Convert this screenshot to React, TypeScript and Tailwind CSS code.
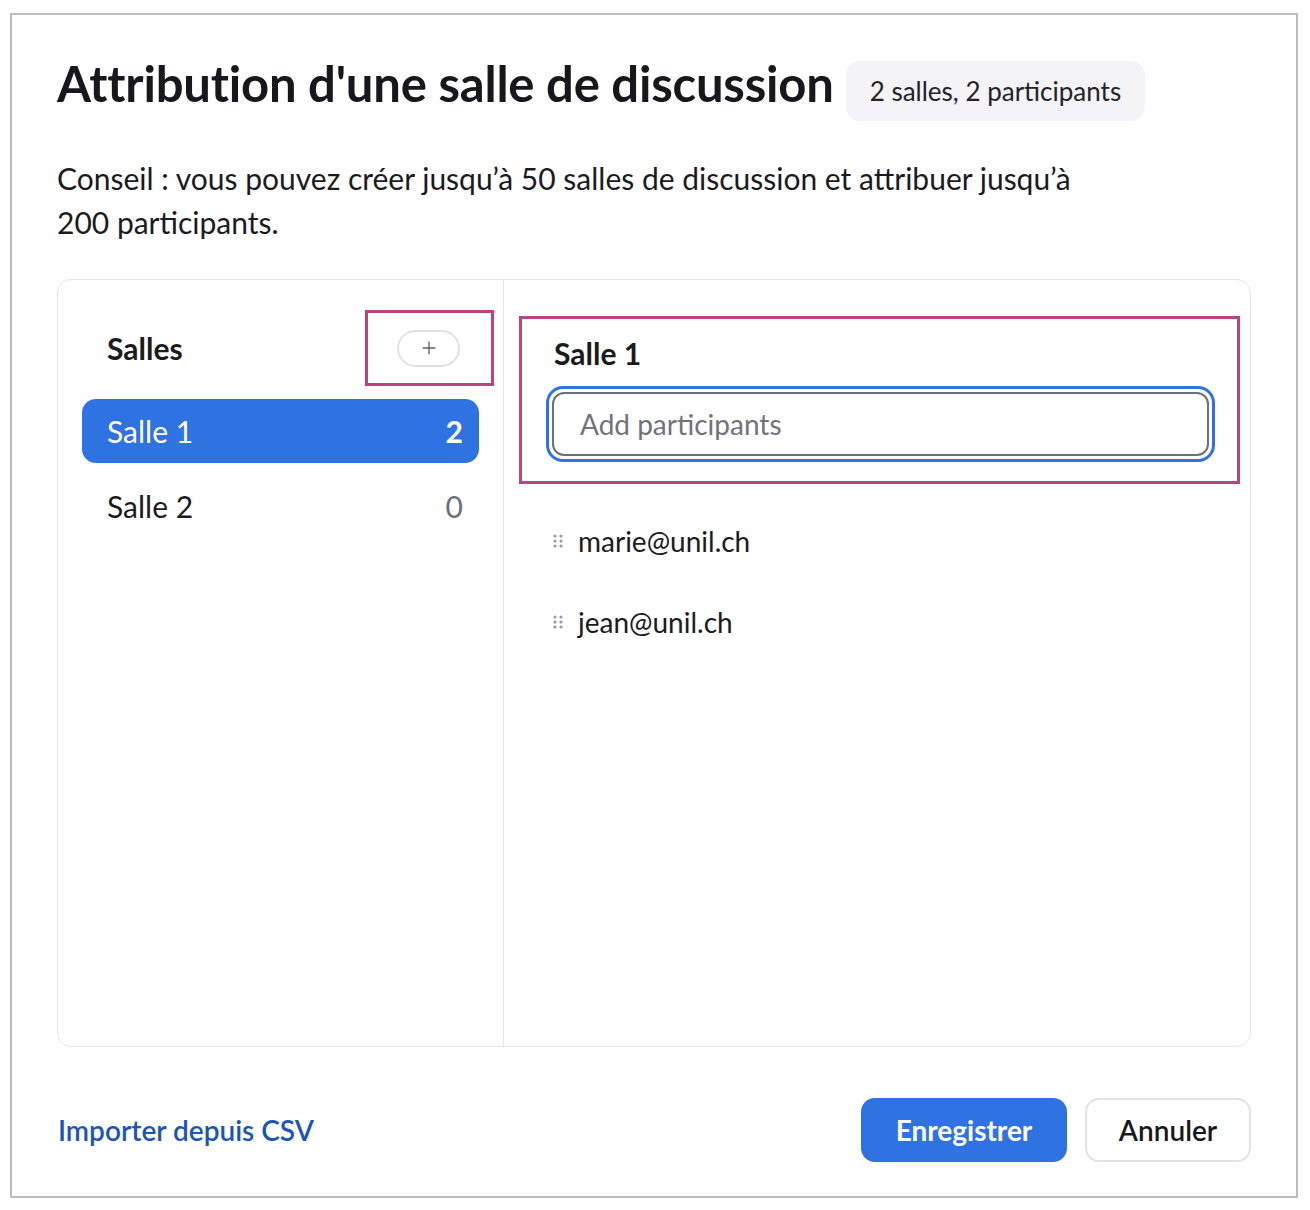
import { Plus } from "lucide-react";

const ROOMS = [
  { name: "Salle 1", count: 2, active: true },
  { name: "Salle 2", count: 0, active: false },
];

const PARTICIPANTS = ["marie@unil.ch", "jean@unil.ch"];

function DragHandle() {
  return (
    <svg width="10" height="14" viewBox="0 0 10 14" className="shrink-0 text-[#9a9ba3]" fill="currentColor">
      <circle cx="2" cy="2" r="1.6" />
      <circle cx="8" cy="2" r="1.6" />
      <circle cx="2" cy="7" r="1.6" />
      <circle cx="8" cy="7" r="1.6" />
      <circle cx="2" cy="12" r="1.6" />
      <circle cx="8" cy="12" r="1.6" />
    </svg>
  );
}

export default function App() {
  return (
    <div className="min-h-[1210px] bg-white pl-[10px] pt-[13px] font-['Lato','Noto_Sans',sans-serif] text-[#1b1b1f]">
      <div className="flex h-[1185px] w-[1288px] flex-col border-2 border-[#bdbdbd] px-[45px] pb-[34px] pt-[46px]">
        {/* header */}
        <div className="flex h-[60px] items-center gap-[12px]">
          <h1 className="mb-[16px] text-[49px] leading-none font-bold tracking-[-0.2px] text-[#18181c]">
            Attribution d'une salle de discussion
          </h1>
          <span className="flex h-[60px] items-center rounded-[14px] bg-[#f4f4f6] px-[24px] text-[26px] text-[#232328]">
            2 salles, 2 participants
          </span>
        </div>

        <p className="mt-[35px] w-[1040px] text-[30px] leading-[44px] text-[#1b1b1f]">
          Conseil : vous pouvez créer jusqu’à 50 salles de discussion et attribuer jusqu’à 200 participants.
        </p>

        {/* main panel */}
        <div className="mt-[35px] flex h-[768px] rounded-[14px] border border-[#e6e6eb]">
          <div className="flex w-[446px] flex-col border-r border-[#e6e6eb] pt-[30px]">
            <div className="flex items-center justify-between pl-[49px] pr-[9px]">
              <span className="text-[30px] font-bold">Salles</span>
              <div className="flex h-[76px] w-[129px] items-center justify-center border-[3px] border-[#b9457f] pr-[2px]">
                <button
                  type="button"
                  aria-label="Ajouter une salle"
                  className="flex h-[37px] w-[63px] items-center justify-center rounded-full border-2 border-[#e0e1e6] text-[#5c5d66]"
                >
                  <Plus className="h-5 w-5" strokeWidth={1.6} />
                </button>
              </div>
            </div>

            <div className="mt-[13px] flex flex-col gap-[11px] px-[24px]">
              {ROOMS.map((room) => (
                <div
                  key={room.name}
                  className={[
                    "flex h-[64px] items-center justify-between rounded-[14px] pl-[25px] pr-[16px] text-[30px]",
                    room.active ? "bg-[#2f72e2] text-white" : "text-[#1b1b1f]",
                  ].join(" ")}
                >
                  <span>{room.name}</span>
                  <span className={room.active ? "font-bold" : "text-[#6e6f7a]"}>{room.count}</span>
                </div>
              ))}
            </div>
          </div>

          <div className="flex flex-1 flex-col pl-[15px] pr-[10px] pt-[36px]">
            <div className="flex flex-col border-[3px] border-[#b9457f] pb-[19px] pl-[24px] pr-[22px] pt-[16px]">
              <h2 className="pl-[8px] text-[30px] leading-[36px] font-bold">Salle 1</h2>
              <div className="mt-[15px] rounded-[17px] border-[3px] border-[#2f72e2] p-[3px]">
                <input
                  placeholder="Add participants"
                  className="h-[64px] w-full rounded-[12px] border-2 border-[#6e7079] px-[26px] text-[28px] text-[#1b1b1f] outline-none placeholder:text-[#71727c]"
                />
              </div>
            </div>

            <ul className="mt-[39px] flex flex-col gap-[45px] pl-[34px]">
              {PARTICIPANTS.map((email) => (
                <li key={email} className="flex h-[36px] items-center gap-[15px] text-[28px]">
                  <DragHandle />
                  <span>{email}</span>
                </li>
              ))}
            </ul>
          </div>
        </div>

        {/* footer */}
        <div className="mt-auto flex items-center justify-between">
          <a href="#" className="pl-[1px] text-[28px] font-semibold text-[#1c55b6]">
            Importer depuis CSV
          </a>
          <div className="flex items-center gap-[18px]">
            <button
              type="button"
              className="flex h-[64px] w-[206px] items-center justify-center rounded-[14px] bg-[#2f72e2] text-[28px] font-bold text-white"
            >
              Enregistrer
            </button>
            <button
              type="button"
              className="flex h-[64px] w-[166px] items-center justify-center rounded-[14px] border-2 border-[#e0e2e7] text-[28px] font-semibold text-[#18181c]"
            >
              Annuler
            </button>
          </div>
        </div>
      </div>
    </div>
  );
}
